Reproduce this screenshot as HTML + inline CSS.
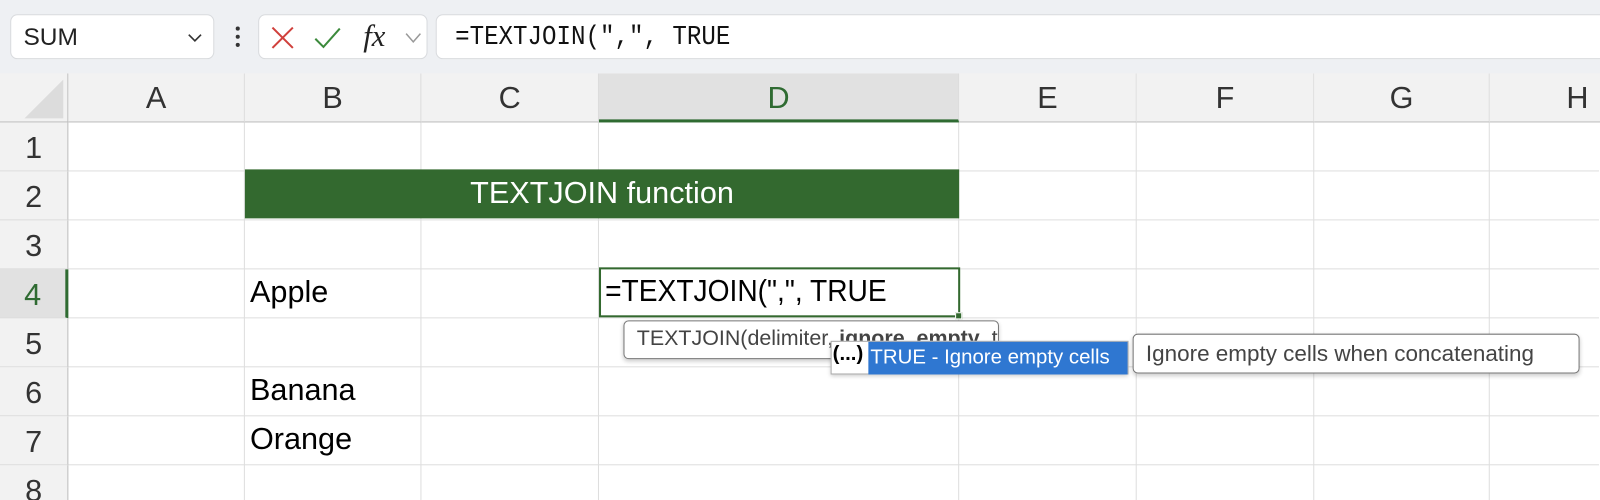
<!DOCTYPE html>
<html style="overflow:hidden;height:500px"><head><style>
*{margin:0;padding:0;box-sizing:border-box}
body{width:1600px;height:500px;overflow:hidden;background:#fff;font-family:"Liberation Sans",sans-serif;position:relative}
#w{position:absolute;left:0;top:0;width:1568px;height:490px;overflow:hidden;transform:scale(1.0204);transform-origin:0 0}
.top{position:absolute;left:0;top:0;width:1600px;height:72px;background:#eef0f3}
.box{position:absolute;background:#fff;border:1px solid #d9dbde;border-radius:7px;top:14px;height:44px}
.abs{position:absolute}
.colh{position:absolute;top:72px;height:48px;background:#f2f2f2;border-right:1px solid #dcdcdc;border-bottom:1px solid #bdbdbd;font-size:30px;color:#333;text-align:center;line-height:50px}
.rowh{position:absolute;left:0;width:67px;height:48px;background:#f2f2f2;border-bottom:1px solid #dcdcdc;border-right:1px solid #bdbdbd;font-size:30px;color:#333;text-align:center;line-height:52px}
.vl{position:absolute;top:120px;height:370px;width:1px;background:#dedede}
.hl{position:absolute;left:67px;width:1500px;height:1px;background:#dedede}
.cell{position:absolute;font-size:30px;color:#000}
</style></head><body><div id="w">
<div class="top"></div>
<div class="box" style="left:10px;width:200px"><span class="abs" style="left:12px;top:8px;font-size:24px;color:#222">SUM</span>
<svg class="abs" style="left:172px;top:16px" width="16" height="12"><path d="M2 3 L8 9 L14 3" fill="none" stroke="#333" stroke-width="1.6"/></svg></div>
<div class="abs" style="left:231px;top:26px;width:4px;height:4px;background:#333;border-radius:2px"></div>
<div class="abs" style="left:231px;top:34px;width:4px;height:4px;background:#333;border-radius:2px"></div>
<div class="abs" style="left:231px;top:42px;width:4px;height:4px;background:#333;border-radius:2px"></div>
<div class="box" style="left:253px;width:166px">
<svg class="abs" style="left:10px;top:9px" width="26" height="26"><path d="M3 3 L23 23 M23 3 L3 23" stroke="#d0403c" stroke-width="2"/></svg>
<svg class="abs" style="left:52px;top:9px" width="30" height="26"><path d="M3 14 L11 22 L27 4" fill="none" stroke="#3c8a3c" stroke-width="2"/></svg>
<span class="abs" style="left:102px;top:4px;font-family:'Liberation Serif',serif;font-style:italic;font-size:30px;color:#222">fx</span>
<svg class="abs" style="left:142px;top:16px" width="18" height="12"><path d="M2 2 L9 10 L16 2" fill="none" stroke="#999" stroke-width="1.5"/></svg></div>
<div class="box" style="left:427px;width:1190px"><span class="abs" style="left:18px;top:6px;font-family:'Liberation Mono',monospace;font-size:26px;color:#111;transform:scaleX(0.91);transform-origin:left;display:inline-block">=TEXTJOIN(",", TRUE</span></div>

<div class="abs" style="left:0;top:72px;width:67px;height:48px;background:#f2f2f2;border-right:1px solid #bdbdbd;border-bottom:1px solid #bdbdbd"></div>
<svg class="abs" style="left:22px;top:78px" width="42" height="40"><path d="M40 0 L40 38 L2 38 Z" fill="#dcdcdc"/></svg>
<div class="colh" style="left:67px;width:173px">A</div>
<div class="colh" style="left:240px;width:173px">B</div>
<div class="colh" style="left:413px;width:174px">C</div>
<div class="colh" style="left:587px;width:353px;background:#e1e1e1;color:#2f6b32;border-bottom:3px solid #2f6b32">D</div>
<div class="colh" style="left:940px;width:174px">E</div>
<div class="colh" style="left:1114px;width:174px">F</div>
<div class="colh" style="left:1288px;width:172px">G</div>
<div class="colh" style="left:1460px;width:140px;text-align:left;padding-left:75px">H</div>

<div class="rowh" style="top:120px">1</div>
<div class="rowh" style="top:168px">2</div>
<div class="rowh" style="top:216px">3</div>
<div class="rowh" style="top:264px;background:#e1e1e1;color:#2f6b32;border-right:3px solid #2f6b32">4</div>
<div class="rowh" style="top:312px">5</div>
<div class="rowh" style="top:360px">6</div>
<div class="rowh" style="top:408px">7</div>
<div class="rowh" style="top:456px">8</div>

<div class="vl" style="left:239px"></div><div class="vl" style="left:412px"></div><div class="vl" style="left:586px"></div><div class="vl" style="left:939px"></div><div class="vl" style="left:1113px"></div><div class="vl" style="left:1287px"></div><div class="vl" style="left:1459px"></div>
<div class="hl" style="top:167px"></div><div class="hl" style="top:215px"></div><div class="hl" style="top:263px"></div><div class="hl" style="top:311px"></div><div class="hl" style="top:359px"></div><div class="hl" style="top:407px"></div><div class="hl" style="top:455px"></div>

<div class="abs" style="left:240px;top:166px;width:700px;height:48px;background:#33692f;color:#fff;font-size:30px;text-align:center;line-height:48px">TEXTJOIN function</div>
<div class="cell" style="left:245px;top:270px">Apple</div>
<div class="cell" style="left:245px;top:366px">Banana</div>
<div class="cell" style="left:245px;top:414px">Orange</div>
<div class="abs" style="left:587px;top:262px;width:354px;height:49px;border:2px solid #33692f;background:#fff"></div>
<div class="abs" style="left:936px;top:306px;width:7px;height:7px;background:#33692f;border:1px solid #fff"></div>
<div class="cell" style="left:593px;top:269px;transform:scaleX(0.92);transform-origin:left">=TEXTJOIN(",", TRUE</div>

<div class="abs" style="left:611px;top:314px;width:368px;height:38px;background:#fff;border:1px solid #777;border-radius:5px;box-shadow:0 2px 4px rgba(0,0,0,.2);font-size:21px;color:#444;padding:5px 0 0 12px;white-space:nowrap;overflow:hidden">TEXTJOIN(delimiter, <b>ignore_empty</b>, text1, [text2], ...)</div>
<div class="abs" style="left:814px;top:334px;width:292px;height:33px;background:#fff;border:1px solid #aaa;box-shadow:0 2px 4px rgba(0,0,0,.2)"></div>
<div class="abs" style="left:816px;top:336px;font-size:20px;font-weight:bold;color:#000">(...)</div>
<div class="abs" style="left:851px;top:335px;width:254px;height:32px;background:#2f77d1;color:#fff;font-size:20px;padding:4px 0 0 2px">TRUE - Ignore empty cells</div>
<div class="abs" style="left:1110px;top:327px;width:438px;height:39px;background:#fff;border:1px solid #777;border-radius:5px;box-shadow:0 2px 4px rgba(0,0,0,.2);font-size:22px;color:#444;padding:6px 0 0 12px;white-space:nowrap">Ignore empty cells when concatenating</div>
</div></body></html>
